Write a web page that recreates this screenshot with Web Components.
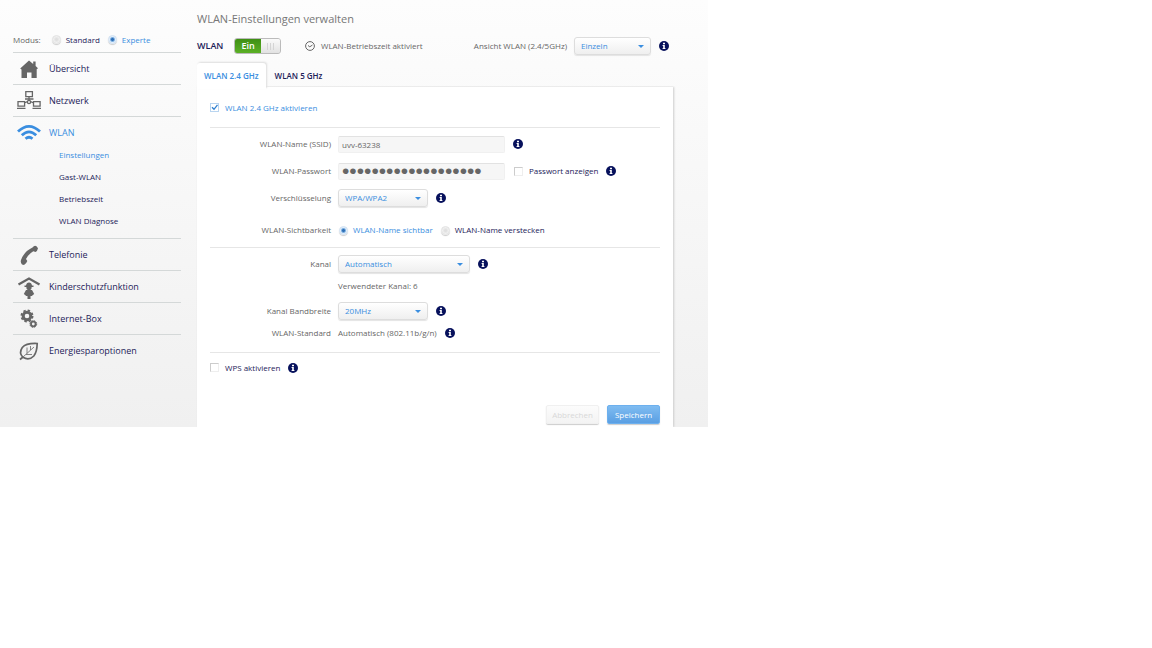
<!DOCTYPE html>
<html lang="de">
<head>
<meta charset="utf-8">
<meta name="viewport" content="width=device-width, initial-scale=1">
<title>WLAN-Einstellungen verwalten</title>
<style>
  body {
    margin: 0;
    background: #fff;
    color: #666;
    font: 8px/12px "Open Sans", "Noto Sans", sans-serif;
    --navy: #1d2259;
    --blue: #3a8ee0;
    --line: #d4d8d8;
  }
</style>
</head>
<body>
<router-app>
  <side-nav slot="nav"></side-nav>
  <page-head></page-head>
  <tab-bar></tab-bar>
  <settings-panel></settings-panel>
</router-app>

<script>
const define = (name, css, html) => {
  customElements.define(name, class extends HTMLElement {
    connectedCallback() {
      if (this.shadowRoot) return;
      const root = this.attachShadow({ mode: 'open' });
      const attr = (key) => this.getAttribute(key) || '';
      root.innerHTML = `<style>*{box-sizing:border-box}${css}</style>${typeof html === 'function' ? html(attr) : html}`;
    }
  });
};

const radioCss = `
  input[type=radio]{appearance:none;flex:none;width:9px;height:9px;margin:0;border-radius:50%;
    border:1px solid #e2e2e2;background:radial-gradient(circle,#e0e0e0 0 1px,#f0f0f0 3px);box-shadow:0 1px 1px #ccc}
  input[type=radio]:checked{border-color:#cfe0f2;background:radial-gradient(circle,#2f6fb5 0 1px,#7db0e2 2px,#e4effa 3px)}
  label{color:var(--navy);font-weight:500}
  input:checked + label{color:var(--blue)}`;

define('router-app', `
  :host{display:block;max-width:708px;background:linear-gradient(#fdfdfd,#f0f0f0)}
  .layout{display:grid;grid-template-columns:168px minmax(0,1fr);gap:16px;padding:0 35px 0 13px}
  main{display:flex;flex-direction:column}`,
  `<div class="layout"><slot name="nav"></slot><main><slot></slot></main></div>`);

define('radio-choice', `
  :host{display:flex;align-items:center;gap:8px}
  .opt{display:flex;align-items:center;gap:5px;white-space:nowrap}
  ${radioCss}`,
  (a) => a('options').split('|').map((text, i) => `<span class="opt">
    <input type="radio" name="choice" id="r${i}" ${String(i) === a('selected') ? 'checked' : ''}>
    <label for="r${i}">${text}</label></span>`).join(''));

define('info-button', `
  :host{display:inline-flex}
  button{display:block;width:10px;height:10px;padding:0;border:0;background:none}
  svg{display:block}`,
  `<button type="button" aria-label="Hilfe"><svg width="10" height="10" viewBox="0 0 10 10"><circle cx="5" cy="5" r="5" fill="#07115c"/><path d="M4 1.8h2v1.5H4zM3.6 4.1h2.2v3h.6v.9H3.6v-.9h.6V5h-.6z" fill="#fff"/></svg></button>`);

const icons = {
  home: `<path fill="#666" d="M12 2.5 16.2 6V3.600h2.400v4.500l2.400 2.200-1.300 1V20h-5.200v-5.500h-4.500V20H4.500v-8.500L3.200 10.600z"/>`,
  net: `<g fill="none" stroke="#666" stroke-width="1.300"><path d="M8.800 1.700h6.600v5H8.800zM1 11.700h6.600v4.500H1zM16.500 11.700h6.600v4.500h-6.600zM0 18.300h8.500M15.500 18.300H24M8 9h8.500M12 7v4M7.500 13l3-1.500M16.500 13l-3-1.500"/><circle cx="12" cy="12" r="1.600"/></g>`,
  wifi: `<g fill="none" stroke="#3a8ee0" stroke-width="2.800"><path d="M1 9.500Q12-.800 23 9.500M4.800 13.300Q12 6.500 19.200 13.300M8.500 16.800Q12 13.800 15.500 16.800"/></g>`,
  phone: `<path fill="#666" d="M15.500 3.500Q17.500 1 19.500 2.300L21 4.300Q20.500 7 18.500 8L16.300 7.300Q11 10.500 9 15L10.300 17Q9.500 19.500 7 21L5 20.500Q3.200 18.500 4 16 7 7.500 15.500 3.500z"/>`,
  child: `<path d="M1.500 8.500 12 2.500 22.500 8.500" fill="none" stroke="#666" stroke-width="2.200"/><g fill="#666"><path d="M9 9.500Q9.500 6.500 12 6.500t3 3h1.500V11h-9V9.500z"/><circle cx="12" cy="11.500" r="2.600"/><path d="M9 14h6l2.200 4-2 1.500V20h-1.700v3h-3v-3H8.800v-.5l-2-1.500z"/></g>`,
  gears: `<g fill="none" stroke="#666"><circle cx="10" cy="8" r="3.800" stroke-width="3"/><circle cx="10" cy="8" r="5.600" stroke-width="1.800" stroke-dasharray="2.400 2"/><circle cx="16.300" cy="16" r="2.300" stroke-width="1.800"/><circle cx="16.300" cy="16" r="3.400" stroke-width="1" stroke-dasharray="1.600 1.070"/></g>`,
  leaf: `<g fill="none" stroke="#666" stroke-width="1.700"><path d="M20.200 3.500Q9 3 5.300 7.500 1.500 13 6 17.300 12 21 16.800 16 20 12 20.200 3.500z"/><path d="m3 19.500 3-2.500"/></g><path d="M6 17 17 7M10 13.500V7.500M9 14.500h6M13.500 10V6" fill="none" stroke="#777" stroke-width=".9"/>`
};

define('nav-item', `
  :host{display:block;border-top:1px solid var(--line)}
  a{display:flex;align-items:center;gap:8px;height:31px;padding-left:4px;color:var(--navy);font-size:9px;font-weight:500;text-decoration:none}
  :host([active]) a{color:var(--blue)}
  svg{flex:none;display:block}`,
  (a) => `<a href="#${a('icon')}"><svg width="24" height="24" viewBox="0 0 24 22">${icons[a('icon')]}</svg><slot></slot></a><slot name="sub"></slot>`);

define('side-nav', `
  :host{display:block}
  .mode{display:flex;align-items:center;gap:11px;height:25px;margin-top:27px}
  ul{list-style:none;margin:0;padding:0 0 10px 46px;display:grid;gap:8px}
  li{line-height:14px}
  li a{color:var(--navy);text-decoration:none;font-weight:500}
  li a[aria-current]{color:var(--blue)}`,
  `<nav aria-label="Hauptmenü">
    <div class="mode"><span>Modus:</span><radio-choice options="Standard|Experte" selected="1"></radio-choice></div>
    <nav-item icon="home">Übersicht</nav-item>
    <nav-item icon="net">Netzwerk</nav-item>
    <nav-item icon="wifi" active>WLAN
      <ul slot="sub">
        <li><a href="#einstellungen" aria-current="page">Einstellungen</a></li>
        <li><a href="#gast">Gast-WLAN</a></li>
        <li><a href="#betriebszeit">Betriebszeit</a></li>
        <li><a href="#diagnose">WLAN Diagnose</a></li>
      </ul>
    </nav-item>
    <nav-item icon="phone">Telefonie</nav-item>
    <nav-item icon="child">Kinderschutzfunktion</nav-item>
    <nav-item icon="gears">Internet-Box</nav-item>
    <nav-item icon="leaf">Energiesparoptionen</nav-item>
  </nav>`);

/* Label, control, then any slotted extras such as a help button. */
const rowCss = `
  :host{display:grid;grid-template-columns:var(--label-width,121px) auto minmax(0,1fr);column-gap:7px;align-items:center;min-height:18px}
  .label{text-align:right;white-space:nowrap}
  .extra{display:flex;align-items:center;gap:8px;padding-left:1px}`;

define('select-field', `${rowCss}
  .box{position:relative;display:block;width:var(--select-width,90px)}
  .box::after{content:"";position:absolute;right:7px;top:8px;border:3px solid transparent;border-top-color:var(--blue);border-bottom:0;pointer-events:none}
  select{appearance:none;display:block;width:100%;height:18px;margin:0;padding:0 6px;border:1px solid #ddd;border-radius:3px;
    background:linear-gradient(#fff,#efefef);box-shadow:0 1px 1px #e4e4e4;color:var(--blue);font:inherit;font-weight:500}`,
  (a) => `<label class="label" for="control">${a('label')}</label>
    <span class="box"><select id="control"><option>${a('value')}</option></select></span>
    <span class="extra"><slot></slot></span>`);

define('text-field', `${rowCss}
  input{display:block;width:167px;height:17px;margin:0;padding:0 3px;border:1px solid #f0f0f0;border-top-color:#e2e2e2;border-radius:2px;
    background:#f6f6f6;color:#666;font:inherit;outline:0}
  input[type=password]{font-family:"Liberation Sans",sans-serif;font-size:21px}`,
  (a) => `<label class="label" for="control">${a('label')}</label>
    <input id="control" type="${a('type') || 'text'}" value="${a('value')}">
    <span class="extra"><slot></slot></span>`);

define('value-field', `${rowCss} :host{min-height:12px} .value{white-space:nowrap}`,
  (a) => `<span class="label">${a('label')}</span><span class="value">${a('value')}</span><span class="extra"><slot></slot></span>`);

define('radio-field', `${rowCss} ::slotted(*){padding-left:1px}`,
  (a) => `<span class="label">${a('label')}</span><slot></slot>`);

define('check-box', `
  :host{display:inline-flex;align-items:center;gap:6px}
  input{appearance:none;flex:none;width:9px;height:9px;margin:0;border:1px solid #eee;border-top-color:#ccc;border-left-color:#ccc;background:#fff}
  input:checked{border-color:#b9d5f0;background:#fff url("data:image/svg+xml,%3Csvg xmlns='http://www.w3.org/2000/svg' viewBox='0 0 7 7'%3E%3Cpath d='M1 3.200 3 5.300 6.500.8' fill='none' stroke='%232f7fd0' stroke-width='1.300'/%3E%3C/svg%3E")}
  label{color:var(--navy);font-weight:500;white-space:nowrap}
  input:checked + label{color:var(--blue)}`,
  (a) => `<input type="checkbox" id="box" ${a('state') === 'on' ? 'checked' : ''}><label for="box"><slot></slot></label>`);

define('toggle-switch', `
  :host{display:block}
  button{display:flex;width:47px;height:16px;padding:0;border:1px solid #bbb;border-radius:3px;overflow:hidden;background:linear-gradient(#eee,#ddd);font:inherit}
  .on{display:grid;place-items:center;width:26px;height:14px;background:linear-gradient(#3f8f14,#5bb026);color:#fff;font-weight:600;font-size:9px}
  .grip{flex:1;height:14px;display:flex;justify-content:center;align-items:center;gap:2px;background:linear-gradient(#fafafa,#e2e2e2)}
  i{width:1px;height:7px;background:#d4d4d4}`,
  `<button type="button" role="switch" aria-checked="true" aria-label="WLAN"><span class="on">Ein</span><span class="grip"><i></i><i></i><i></i></span></button>`);

define('page-head', `
  :host{display:block}
  h1{margin:11px 0 10px;font-size:11px;line-height:16px;font-weight:500;color:#777}
  .bar{display:flex;align-items:center;height:18px}
  b{width:37px;color:var(--navy);font-size:9px;font-weight:600}
  .time{display:flex;align-items:center;gap:6px;margin-left:24px;white-space:nowrap}
  select-field{margin-left:auto;--label-width:auto;--select-width:77px}
  info-button{margin-right:4px}`,
  `<header><h1>WLAN-Einstellungen verwalten</h1>
    <div class="bar"><b>WLAN</b><toggle-switch></toggle-switch>
      <span class="time"><svg width="10" height="10" viewBox="0 0 10 10" fill="none" stroke="#666"><circle cx="5" cy="5" r="4.400"/><path d="m3 4.500 1.800 1.300L7.500 4"/></svg>WLAN-Betriebszeit aktiviert</span>
      <select-field label="Ansicht WLAN (2.4/5GHz)" value="Einzeln"><info-button></info-button></select-field>
    </div></header>`);

define('tab-bar', `
  :host{display:block;margin-top:8px}
  div{display:flex;align-items:flex-start;height:24px}
  button{height:26px;padding:0 9px;border:0;border-radius:3px 3px 0 0;background:none;color:var(--navy);font:inherit;font-weight:600;white-space:nowrap}
  button[aria-selected=true]{position:relative;z-index:1;padding:0 7px;background:#fff;color:var(--blue);box-shadow:1px -1px 2px #ddd}`,
  `<div role="tablist"><button role="tab" aria-selected="true">WLAN 2.4 GHz</button><button role="tab" aria-selected="false">WLAN 5 GHz</button></div>`);

define('action-button', `
  :host{display:block}
  button{display:block;min-width:53px;height:19px;padding:0 5px;border:1px solid #6db0ee;border-radius:2px;
    background:linear-gradient(#7fbcf1,#5a9fe3);box-shadow:0 1px 1px #ccc;color:#fff;font:inherit;font-weight:500}
  button:disabled{border-color:#f0f0f0;background:linear-gradient(#fcfcfc,#f3f3f3);color:#d8d8d8}`,
  (a) => `<button type="button" ${a('state') === 'off' ? 'disabled' : ''}><slot></slot></button>`);

define('settings-panel', `
  :host{display:block;padding:1px 13px 3px;background:#fff;box-shadow:1px 0 2px #ccc;clip-path:inset(-1px -4px 0 -1px)}
  section{display:grid;border-bottom:1px solid #e6e6e6}
  .enable{height:40px;align-items:center}
  .access{padding:7px 0 8px;row-gap:9px}
  .access radio-field{margin-top:5px}
  .channel{padding:7px 0 13px;row-gap:7px}
  .band{margin-top:3px}
  .wps{display:flex;align-items:center;gap:8px;height:29px}
  footer{display:flex;justify-content:flex-end;gap:8px;margin-top:23px}
  .show{margin-left:1px}`,
  `<form>
    <section class="enable"><check-box state="on">WLAN 2.4 GHz aktivieren</check-box></section>
    <section class="access">
      <text-field label="WLAN-Name (SSID)" value="uvv-63238"><info-button></info-button></text-field>
      <text-field label="WLAN-Passwort" type="password" value="abcdefghijklmnopqrs"><check-box class="show">Passwort anzeigen</check-box><info-button></info-button></text-field>
      <select-field label="Verschlüsselung" value="WPA/WPA2"><info-button></info-button></select-field>
      <radio-field label="WLAN-Sichtbarkeit"><radio-choice options="WLAN-Name sichtbar|WLAN-Name verstecken" selected="0"></radio-choice></radio-field>
    </section>
    <section class="channel">
      <select-field label="Kanal" value="Automatisch" style="--select-width:132px"><info-button></info-button></select-field>
      <value-field value="Verwendeter Kanal: 6"></value-field>
      <select-field class="band" label="Kanal Bandbreite" value="20MHz"><info-button></info-button></select-field>
      <value-field label="WLAN-Standard" value="Automatisch (802.11b/g/n)"><info-button></info-button></value-field>
    </section>
    <div class="wps"><check-box>WPS aktivieren</check-box><info-button></info-button></div>
    <footer><action-button state="off">Abbrechen</action-button><action-button>Speichern</action-button></footer>
  </form>`);
</script>
</body>
</html>
